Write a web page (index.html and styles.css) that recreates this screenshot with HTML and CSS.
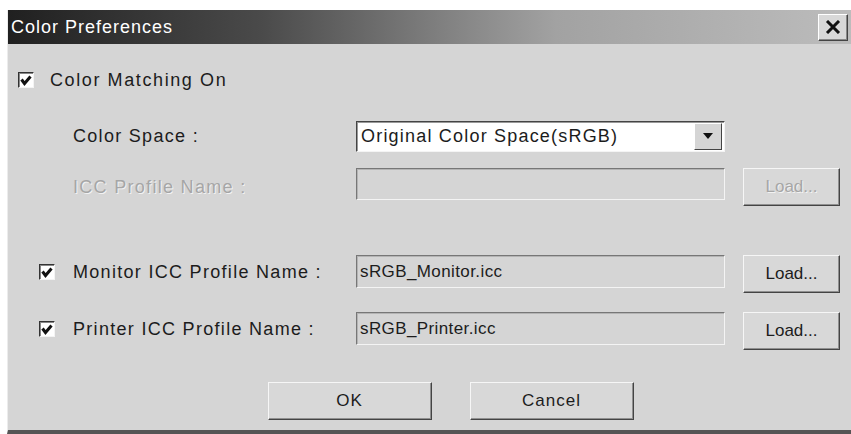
FILE: index.html
```html
<!DOCTYPE html>
<html lang="en">

<head>
    <meta charset="utf-8">
    <title>Color Preferences</title>
    <link rel="stylesheet" href="styles.css">
</head>

<body>
    <div class="dialog">
        <div class="titlebar">
            <span class="title">Color Preferences</span>
            <button class="close">
                <svg width="16" height="14" viewBox="0 0 16 14">
                    <path d="M2 1 L14 13 M14 1 L2 13" stroke="#111" stroke-width="3" />
                </svg>
            </button>
        </div>

        <div class="row row-main">
            <span class="check">
                <svg width="12" height="11" viewBox="0 0 12 11">
                    <path d="M1.5 4.5 L4.5 8.5 L10.5 1.5" fill="none" stroke="#111" stroke-width="3" />
                </svg>
            </span>
            <span class="label label-main">Color Matching On</span>
        </div>

        <div class="row row-space">
            <span class="label col-label">Color Space :</span>
            <div class="select">
                <span class="select-text">Original Color Space(sRGB)</span>
                <span class="select-btn">
                    <svg width="10" height="6" viewBox="0 0 10 6">
                        <path d="M0 0 L10 0 L5 6 Z" fill="#111" />
                    </svg>
                </span>
            </div>
        </div>

        <div class="row row-icc">
            <span class="label col-label disabled">ICC Profile Name :</span>
            <div class="field field-disabled"></div>
            <button class="btn btn-disabled">Load...</button>
        </div>

        <div class="row row-profile row-monitor">
            <span class="check check-small">
                <svg width="12" height="11" viewBox="0 0 12 11">
                    <path d="M1.5 4.5 L4.5 8.5 L10.5 1.5" fill="none" stroke="#111" stroke-width="3" />
                </svg>
            </span>
            <span class="label col-label">Monitor ICC Profile Name :</span>
            <div class="field">sRGB_Monitor.icc</div>
            <button class="btn">Load...</button>
        </div>

        <div class="row row-profile row-printer">
            <span class="check check-small">
                <svg width="12" height="11" viewBox="0 0 12 11">
                    <path d="M1.5 4.5 L4.5 8.5 L10.5 1.5" fill="none" stroke="#111" stroke-width="3" />
                </svg>
            </span>
            <span class="label col-label">Printer ICC Profile Name :</span>
            <div class="field">sRGB_Printer.icc</div>
            <button class="btn">Load...</button>
        </div>

        <div class="row row-actions">
            <button class="btn btn-wide">OK</button>
            <button class="btn btn-wide">Cancel</button>
        </div>
    </div>
</body>

</html>
```

FILE: styles.css
```css
body {
    margin: 0;
    background-color: #ffffff;
    font-family: "Liberation Sans", Arial, sans-serif;
    color: #1c1c1c;
}

.dialog {
    margin: 10px 0 0 7px;
    width: 844px;
    height: 424px;
    background-color: #d5d5d5;
    border-left: 1px solid #ececec;
    border-bottom: 4px solid #555555;
    box-sizing: border-box;
}

.titlebar {
    height: 34px;
    display: flex;
    align-items: center;
    justify-content: space-between;
    padding: 0 3px 0 3px;
    background: linear-gradient(90deg, #202020 0%, #4a4a4a 30%, #a2a2a2 65%, #bcbcbc 100%);
}

.title {
    color: #ffffff;
    font-size: 18px;
    letter-spacing: 1px;
}

.close {
    width: 30px;
    height: 27px;
    padding: 0;
    display: flex;
    align-items: center;
    justify-content: center;
    background-color: #d8d8d8;
    border: 1px solid;
    border-color: #ffffff #444444 #444444 #ffffff;
    box-shadow: inset -1px -1px 0 #888888;
}

.row {
    display: flex;
    align-items: center;
}

.label {
    font-size: 18px;
    letter-spacing: 1.3px;
    white-space: nowrap;
}

.label-main {
    letter-spacing: 1.6px;
}

.disabled {
    color: #a6a6a6;
    text-shadow: 1px 1px 0 #f2f2f2;
}

.check {
    width: 14px;
    height: 14px;
    display: flex;
    align-items: center;
    justify-content: center;
    background-color: #ffffff;
    border: 1px solid;
    border-color: #333333 #f4f4f4 #f4f4f4 #333333;
    box-shadow: inset 1px 1px 0 #888888;
}

.row-main {
    height: 28px;
    margin-top: 22px;
    padding-left: 10px;
    gap: 16px;
}

.row-space {
    height: 32px;
    margin-top: 26px;
    padding-left: 65px;
}

.col-label {
    width: 283px;
}

.select {
    width: 367px;
    height: 29px;
    display: flex;
    align-items: center;
    justify-content: space-between;
    background-color: #ffffff;
    border: 1px solid;
    border-color: #444444 #f4f4f4 #f4f4f4 #444444;
    box-shadow: inset 1px 1px 0 #999999;
}

.select-text {
    font-size: 18px;
    padding-left: 4px;
    letter-spacing: 1.2px;
}

.select-btn {
    width: 26px;
    height: 25px;
    margin-right: 2px;
    display: flex;
    align-items: center;
    justify-content: center;
    background-color: #d5d5d5;
    border: 1px solid;
    border-color: #ffffff #444444 #444444 #ffffff;
}

.row-icc {
    align-items: flex-start;
    height: 38px;
    margin-top: 16px;
    padding-left: 65px;
}

.row-icc .label {
    line-height: 38px;
}

.field {
    width: 369px;
    height: 33px;
    box-sizing: border-box;
    padding-left: 3px;
    display: flex;
    align-items: center;
    font-size: 17px;
    letter-spacing: 0.4px;
    border: 1px solid;
    border-color: #777777 #f4f4f4 #f4f4f4 #777777;
    box-shadow: inset 1px 1px 0 #b4b4b4;
}

.field-disabled {
    height: 32px;
}

.btn {
    width: 97px;
    height: 38px;
    margin-left: 18px;
    padding: 0;
    font-family: "Liberation Sans", Arial, sans-serif;
    font-size: 17px;
    color: #1c1c1c;
    background-color: #d8d8d8;
    border: 1px solid;
    border-color: #f6f6f6 #444444 #444444 #f6f6f6;
    box-shadow: inset -1px -1px 0 #909090;
}

.btn-disabled {
    color: #a6a6a6;
    text-shadow: 1px 1px 0 #f2f2f2;
}

.row-profile {
    align-items: flex-start;
    height: 40px;
    padding-left: 31px;
}

.row-profile .label {
    line-height: 35px;
}

.check-small {
    margin-top: 9px;
    margin-right: 18px;
}

.row-monitor {
    margin-top: 49px;
}

.row-printer {
    margin-top: 17px;
}

.row-actions {
    justify-content: center;
    gap: 38px;
    margin-top: 30px;
    padding-left: 42px;
}

.btn-wide {
    width: 164px;
    margin-left: 0;
    letter-spacing: 1px;
}
```
